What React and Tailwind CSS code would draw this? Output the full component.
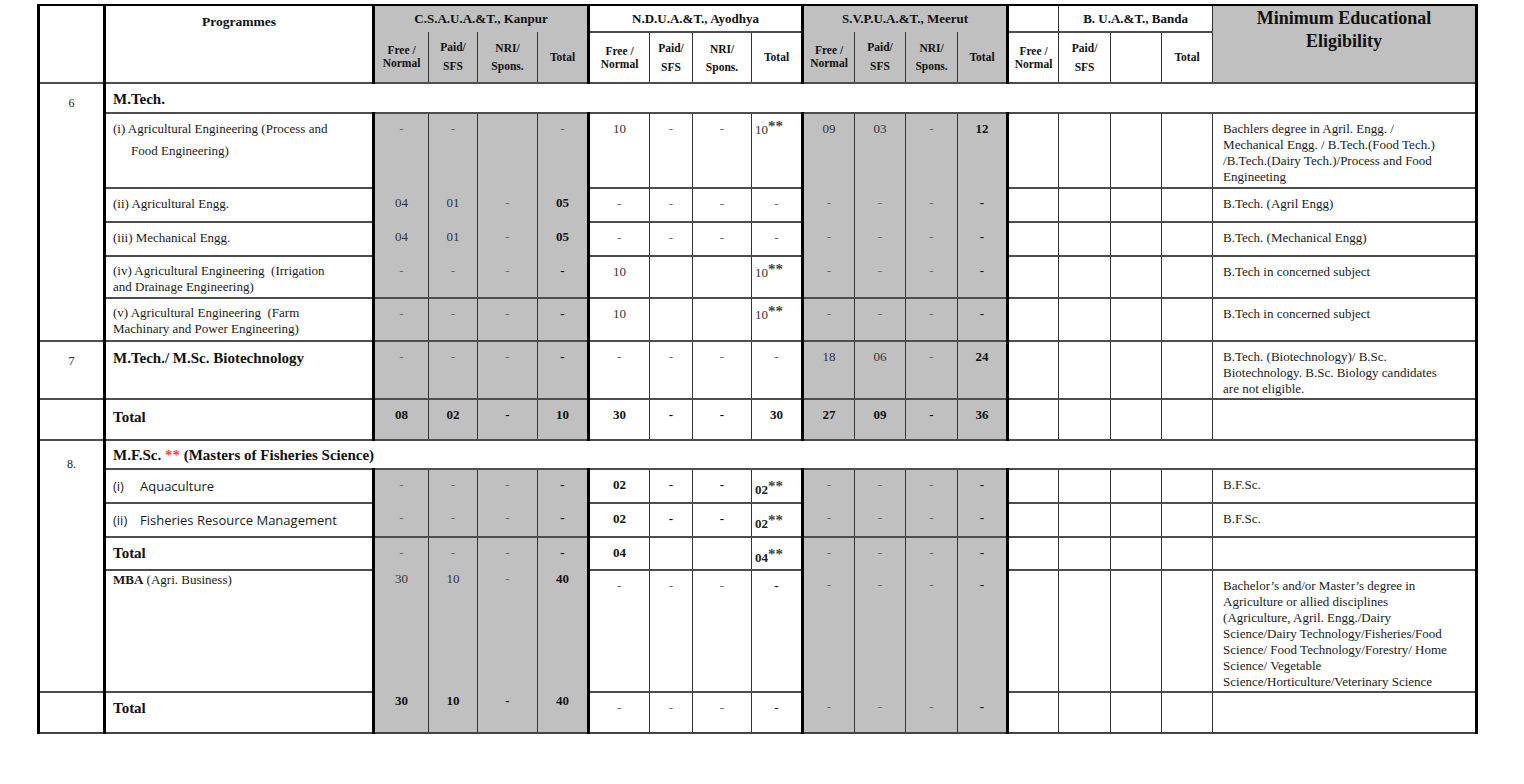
import React from "react";

// column widths: S.No., Programmes, 4 x 4 seat columns, eligibility
const COLS = [
  "w-[66px]", "w-[269px]",
  "w-[55px]", "w-[49px]", "w-[60px]", "w-[51px]",
  "w-[61px]", "w-[43px]", "w-[59px]", "w-[51px]",
  "w-[52px]", "w-[51px]", "w-[52px]", "w-[50px]",
  "w-[51px]", "w-[52px]", "w-[51px]", "w-[51px]",
  "w-[264px]",
];

const isGray = (i) => i < 4 || (i >= 8 && i < 12);
const HL = "border-t-2 border-t-[#4d4d4d]";
const THICK_L = "border-l-[3px] border-l-black";
const THIN_L = "border-l border-l-[#333]";

function Val({ v }) {
  if (!v) return null;
  let bold = false;
  let s = v;
  if (s.startsWith("!")) {
    bold = true;
    s = s.slice(1);
  }
  if (s === "-") {
    return <span className={bold ? "font-bold text-[#111]" : "text-[#666]"}>-</span>;
  }
  if (s.endsWith("**")) {
    return (
      <span className={"block text-left pl-[3px] " + (bold ? "font-bold text-[#222] pt-[4px]" : "text-[#333]")}>
        {s.slice(0, -2)}
        <span className="relative -top-[3px] font-bold text-[15px] text-[#444]">**</span>
      </span>
    );
  }
  return <span className={bold ? "font-bold text-[#111]" : "text-[#333]"}>{s}</span>;
}

function SNo({ text, span, pt = "pt-[11px]" }) {
  return (
    <td rowSpan={span} className={`${THICK_L} ${HL} bg-white align-top text-center text-[12px] leading-[16px] ${pt}`}>
      {text}
    </td>
  );
}

function Elig({ lines, last }) {
  return (
    <td className={`${THIN_L} ${HL} border-r-[3px] border-r-black ${last ? "border-b-2 border-b-[#444]" : ""} bg-white align-top text-left pl-[10px] pt-[7px] text-[13px] leading-[16px] text-[#1a1a1a]`}>
      {lines.map((l, i) => (
        <div key={i} className="whitespace-nowrap">{l}</div>
      ))}
    </td>
  );
}

function DataRow({ h, sno, label, vals, elig = [], faint, last, pt = "pt-[7px]", kpt }) {
  const bb = last ? "border-b-2 border-b-[#444]" : "";
  return (
    <tr className={h}>
      {sno}
      <td className={`${THICK_L} ${HL} ${bb} bg-white align-top text-left pl-[7px] ${pt}`}>{label}</td>
      {vals.map((v, i) => {
        const gray = isGray(i);
        return (
          <td
            key={i}
            className={[
              "align-top text-center text-[13px] leading-[16px]",
              i < 4 && kpt ? kpt : "pt-[7px]",
              gray ? "bg-[#c0c0c0]" : "bg-white",
              i % 4 === 0 ? THICK_L : THIN_L,
              faint && gray ? "border-t-0" : HL,
              bb,
            ].join(" ")}
          >
            <Val v={v} />
          </td>
        );
      })}
      <Elig lines={elig} last={last} />
    </tr>
  );
}

function SpanRow({ h, sno, children, pt }) {
  return (
    <tr className={h}>
      {sno}
      <td colSpan={18} className={`${THICK_L} ${HL} border-r-[3px] border-r-black bg-white align-top text-left pl-[7px] ${pt} text-[15px] font-bold leading-[18px] text-[#111]`}>
        {children}
      </td>
    </tr>
  );
}

const Reg = ({ lines }) => (
  <div className="text-[13px] leading-[16px] text-[#1a1a1a]">
    {lines.map((l, i) => (
      <div key={i} className="whitespace-pre">{l}</div>
    ))}
  </div>
);

const Bold = ({ children }) => <div className="text-[15px] font-bold leading-[18px] text-[#111]">{children}</div>;

const Sans = ({ n, t }) => (
  <div className="flex font-['Open_Sans',sans-serif] text-[13px] leading-[18px] text-[#1a1a1a]">
    <span className="w-[27px]">{n}</span>
    <span>{t}</span>
  </div>
);

const SUBS = [
  { l: ["Free /", "Normal"], lh: "leading-[13px]" },
  { l: ["Paid/", "SFS"], lh: "leading-[19px]" },
  { l: ["NRI/", "Spons."], lh: "leading-[18px]" },
  { l: ["Total"], lh: "leading-[13px]" },
];
const BANDA_SUBS = [SUBS[0], SUBS[1], { l: [], lh: "" }, SUBS[3]];

function SubHeads({ items, gray }) {
  return items.map((s, i) => (
    <th
      key={i}
      className={[
        "align-middle text-center font-bold text-[11.5px] text-[#111]",
        s.lh,
        gray ? "bg-[#c0c0c0] border-t-0" : `bg-white ${HL}`,
        i === 0 ? THICK_L : THIN_L,
      ].join(" ")}
    >
      {s.l.map((x, j) => (
        <div key={j} className="whitespace-nowrap">{x}</div>
      ))}
    </th>
  ));
}

const DASHES_K = ["-", "-", "-", "!-"];
const DASHES_A = ["-", "-", "-", "-"];
const EMPTY = ["", "", "", ""];

export default function App() {
  const top = "border-t-2 border-t-black";
  const grp = `${THICK_L} ${top} align-top text-center font-bold text-[13px] leading-[16px] pt-[5px] text-[#111]`;
  return (
    <div className="min-h-screen bg-white pl-[37px] pt-[4px] font-['Liberation_Serif',serif] text-[#222]">
      <table className="table-fixed w-[1438px]">
        <colgroup>
          {COLS.map((c, i) => (
            <col key={i} className={c} />
          ))}
        </colgroup>
        <thead>
          <tr className="h-[27px]">
            <th rowSpan={2} className={`${THICK_L} ${top} bg-white`}></th>
            <th rowSpan={2} className={`${THICK_L} ${top} bg-white align-top text-center pt-[8px] font-bold text-[13.5px] leading-[16px] text-[#111]`}>
              Programmes
            </th>
            <th colSpan={4} className={`${grp} bg-[#c0c0c0]`}>C.S.A.U.A.&amp;T., Kanpur</th>
            <th colSpan={4} className={`${grp} bg-white`}>N.D.U.A.&amp;T., Ayodhya</th>
            <th colSpan={4} className={`${grp} bg-[#c0c0c0]`}>S.V.P.U.A.&amp;T., Meerut</th>
            <th className={`${grp} bg-white`}></th>
            <th colSpan={3} className={`${THIN_L} ${top} bg-white align-top text-center font-bold text-[13px] leading-[16px] pt-[5px] text-[#111]`}>
              B. U.A.&amp;T., Banda
            </th>
            <th rowSpan={2} className={`${THIN_L} ${top} border-r-[3px] border-r-black bg-[#c0c0c0] align-top text-center pt-[1px] font-bold text-[18px] leading-[23px] text-[#111]`}>
              <div>Minimum Educational</div>
              <div>Eligibility</div>
            </th>
          </tr>
          <tr className="h-[51px]">
            <SubHeads items={SUBS} gray />
            <SubHeads items={SUBS} />
            <SubHeads items={SUBS} gray />
            <SubHeads items={BANDA_SUBS} />
          </tr>
        </thead>
        <tbody>
          <SpanRow h="h-[30px]" pt="pt-[6px]" sno={<SNo text="6" span={6} />}>M.Tech.</SpanRow>
          <DataRow
            h="h-[75px]"
            pt="pt-[4px]"
            label={
              <div className="text-[13px] leading-[22px] text-[#1a1a1a]">
                <div className="whitespace-nowrap">(i) Agricultural Engineering (Process and</div>
                <div className="whitespace-nowrap pl-[18px]">Food Engineering)</div>
              </div>
            }
            vals={["-", "-", "", "-", "10", "-", "-", "10**", "09", "03", "-", "!12", ...EMPTY]}
            elig={[
              "Bachlers degree in Agril. Engg. /",
              "Mechanical Engg. / B.Tech.(Food Tech.)",
              "/B.Tech.(Dairy Tech.)/Process and Food",
              "Engineeting",
            ]}
          />
          <DataRow
            h="h-[34px]"
            faint
            label={<Reg lines={["(ii) Agricultural Engg."]} />}
            vals={["04", "01", "-", "!05", ...DASHES_A, ...DASHES_K, ...EMPTY]}
            elig={["B.Tech. (Agril Engg)"]}
          />
          <DataRow
            h="h-[34px]"
            faint
            label={<Reg lines={["(iii) Mechanical Engg."]} />}
            vals={["04", "01", "-", "!05", ...DASHES_A, ...DASHES_K, ...EMPTY]}
            elig={["B.Tech. (Mechanical Engg)"]}
          />
          <DataRow
            h="h-[42px]"
            faint
            pt="pt-[6px]"
            label={<Reg lines={["(iv) Agricultural Engineering  (Irrigation", "and Drainage Engineering)"]} />}
            vals={[...DASHES_K, "10", "", "", "10**", ...DASHES_K, ...EMPTY]}
            elig={["B.Tech in concerned subject"]}
          />
          <DataRow
            h="h-[43px]"
            pt="pt-[6px]"
            label={<Reg lines={["(v) Agricultural Engineering  (Farm", "Machinary and Power Engineering)"]} />}
            vals={[...DASHES_K, "10", "", "", "10**", ...DASHES_K, ...EMPTY]}
            elig={["B.Tech in concerned subject"]}
          />
          <DataRow
            h="h-[58px]"
            sno={<SNo text="7" />}
            label={<Bold>M.Tech./ M.Sc. Biotechnology</Bold>}
            vals={[...DASHES_K, ...DASHES_A, "18", "06", "-", "!24", ...EMPTY]}
            elig={["B.Tech. (Biotechnology)/ B.Sc.", "Biotechnology. B.Sc. Biology candidates", "are not eligible."]}
          />
          <DataRow
            h="h-[41px]"
            pt="pt-[8px]"
            sno={<SNo text="" />}
            label={<Bold>Total</Bold>}
            vals={["!08", "!02", "!-", "!10", "!30", "!-", "!-", "!30", "!27", "!09", "!-", "!36", ...EMPTY]}
          />
          <SpanRow h="h-[29px]" pt="pt-[5px]" sno={<SNo text="8." span={5} pt="pt-[15px]" />}>
            M.F.Sc. <span className="text-[#ec4a43]">**</span> (Masters of Fisheries Science)
          </SpanRow>
          <DataRow
            h="h-[34px]"
            pt="pt-[7px]"
            label={<Sans n="(i)" t="Aquaculture" />}
            vals={[...DASHES_K, "!02", "!-", "!-", "!02**", ...DASHES_K, ...EMPTY]}
            elig={["B.F.Sc."]}
          />
          <DataRow
            h="h-[34px]"
            faint
            pt="pt-[7px]"
            label={<Sans n="(ii)" t="Fisheries Resource Management" />}
            vals={[...DASHES_K, "!02", "!-", "!-", "!02**", ...DASHES_K, ...EMPTY]}
            elig={["B.F.Sc."]}
          />
          <DataRow
            h="h-[33px]"
            pt="pt-[6px]"
            label={<Bold>Total</Bold>}
            vals={[...DASHES_K, "!04", "", "", "!04**", ...DASHES_K, ...EMPTY]}
          />
          <DataRow
            h="h-[122px]"
            faint
            pt="pt-[1px]"
            kpt="pt-[1px]"
            label={
              <div className="text-[13px] leading-[16px] text-[#1a1a1a]">
                <span className="font-bold">MBA</span> (Agri. Business)
              </div>
            }
            vals={["30", "10", "-", "!40", "-", "-", "-", "!-", ...DASHES_K, ...EMPTY]}
            elig={[
              "Bachelor\u2019s and/or Master\u2019s degree in",
              "Agriculture or allied disciplines",
              "(Agriculture, Agril. Engg./Dairy",
              "Science/Dairy Technology/Fisheries/Food",
              "Science/ Food Technology/Forestry/ Home",
              "Science/ Vegetable",
              "Science/Horticulture/Veterinary Science",
            ]}
          />
          <DataRow
            h="h-[41px]"
            faint
            last
            pt="pt-[6px]"
            kpt="pt-[1px]"
            sno={
              <td className={`${THICK_L} ${HL} border-b-2 border-b-[#444] bg-white`}></td>
            }
            label={<Bold>Total</Bold>}
            vals={["!30", "!10", "!-", "!40", "-", "-", "-", "!-", ...DASHES_K, ...EMPTY]}
          />
        </tbody>
      </table>
    </div>
  );
}
